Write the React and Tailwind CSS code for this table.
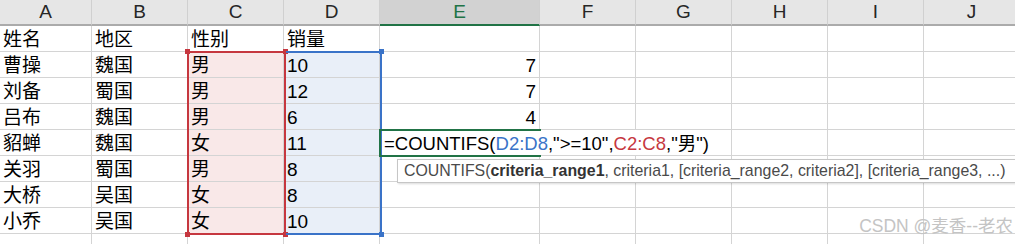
import React from 'react';

const cols = [
  { key: 'A', w: 'w-[92px]' },
  { key: 'B', w: 'w-[96px]' },
  { key: 'C', w: 'w-[96px]' },
  { key: 'D', w: 'w-[96px]' },
  { key: 'E', w: 'w-[160px]' },
  { key: 'F', w: 'w-[96px]' },
  { key: 'G', w: 'w-[96px]' },
  { key: 'H', w: 'w-[96px]' },
  { key: 'I', w: 'w-[96px]' },
  { key: 'J', w: 'w-[96px]' },
];

const rows = [
  ['姓名', '地区', '性别', '销量', ''],
  ['曹操', '魏国', '男', '10', '7'],
  ['刘备', '蜀国', '男', '12', '7'],
  ['吕布', '魏国', '男', '6', '4'],
  ['貂蝉', '魏国', '女', '11', ''],
  ['关羽', '蜀国', '男', '8', ''],
  ['大桥', '吴国', '女', '8', ''],
  ['小乔', '吴国', '女', '10', ''],
  ['', '', '', '', ''],
];

const EDIT_ROW = 4;
const EDIT_COL = 4;

function HeaderRow() {
  return (
    <div className="flex h-[26px] shrink-0">
      {cols.map((c) => {
        const active = c.key === 'E';
        return (
          <div
            key={c.key}
            className={`${c.w} shrink-0 h-[26px] flex items-center justify-center border-r border-[#d0d0d0] text-[19px] ${
              active
                ? 'bg-[#d2d2d2] text-[#217346] border-b-2 border-b-[#217346]'
                : 'bg-[#e6e6e6] text-[#262626] border-b-2 border-b-[#ababab]'
            }`}
          >
            <span className="pt-[1px]">{c.key}</span>
          </div>
        );
      })}
    </div>
  );
}

// formula being typed into E5, spills over F and G
function Formula() {
  return (
    <>
      <div className="absolute -left-[1px] -top-[1px] w-[162px] h-[28px] border-2 border-r-0 border-[#217346]" />
      <span className="relative z-10 pl-[4px] text-[18.5px]">
        =COUNTIFS(<span className="text-[#3a73c8]">D2:D8</span>,"&gt;=10",
        <span className="text-[#c6373f]">C2:C8</span>,"男")
      </span>
    </>
  );
}

function Cell({ col, ci, value, ri }) {
  const inRange = ri >= 1 && ri <= 7;
  const fill = inRange ? (ci === 2 ? 'bg-[#f9e8e8]' : ci === 3 ? 'bg-[#e9eff8]' : '') : '';
  const editing = ri === EDIT_ROW && ci === EDIT_COL;
  // gridlines under the spilled formula are hidden
  const hideRight = ri === EDIT_ROW && (ci === 4 || ci === 5);
  const alignRight = ci === 4 && !editing;
  return (
    <div
      className={`${col.w} shrink-0 h-[26px] border-b border-[#d4d4d4] ${hideRight ? '' : 'border-r'} ${fill} ${
        alignRight ? 'text-right pr-[3px]' : editing ? '' : 'pl-[3px]'
      } ${editing ? 'relative z-10 overflow-visible' : ''} text-[19px] leading-[25px] pt-[1px] text-black whitespace-nowrap`}
    >
      {editing ? <Formula /> : value}
    </div>
  );
}

function Range({ className, squares, color }) {
  return (
    <div className={`absolute pointer-events-none ${className}`}>
      {squares.map((s) => (
        <div key={s} className={`absolute w-[5px] h-[5px] ${color} ${s}`} />
      ))}
    </div>
  );
}

export default function App() {
  return (
    <div className="relative w-[1015px] h-[244px] overflow-hidden bg-white font-['Liberation_Sans','Noto_Sans_CJK_SC',sans-serif]">
      <HeaderRow />
      <div className="relative">
        {rows.map((r, ri) => (
          <div key={ri} className="flex">
            {cols.map((c, ci) => (
              <Cell key={c.key} col={c} ci={ci} ri={ri} value={r[ci] || ''} />
            ))}
          </div>
        ))}

        {/* C2:C8 reference range */}
        <Range
          className="left-[187px] top-[25px] w-[99px] h-[184px] border-2 border-[#c6373f]"
          color="bg-[#c6373f]"
          squares={[
            'left-[-4px] top-[-4px]',
            'right-[-4px] top-[-4px]',
            'left-[-4px] bottom-[-4px]',
            'right-[-4px] bottom-[-4px]',
          ]}
        />
        {/* D2:D8 reference range */}
        <Range
          className="left-[286px] top-[25px] w-[96px] h-[184px] border-y-2 border-r-2 border-[#3a73c8]"
          color="bg-[#3a73c8]"
          squares={['right-[-4px] top-[-4px]', 'right-[-4px] bottom-[-4px]']}
        />

        {/* argument hint under the edited cell */}
        <div className="absolute z-20 left-[397px] top-[133px] w-[620px] h-[24px] bg-white border border-[#c6c6c6] shadow-[1px_1px_2px_rgba(0,0,0,0.15)] pl-[6px] text-[15.9px] leading-[22px] text-[#4a4a4a] whitespace-nowrap">
          COUNTIFS(<span className="font-bold text-[#333]">criteria_range1</span>, criteria1, [criteria_range2, criteria2], [criteria_range3, ...)
        </div>

        <div className="absolute right-[2px] top-[189px] text-[17.5px] leading-[22px] text-[#c4c4c4] whitespace-nowrap">
          CSDN @麦香--老农
        </div>
      </div>
    </div>
  );
}
